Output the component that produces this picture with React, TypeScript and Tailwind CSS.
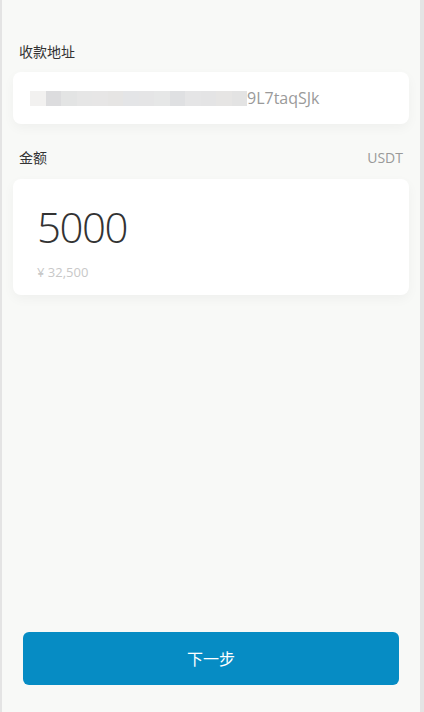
const blocks = [
  '#f2f1f0', '#dcdcde', '#e3e4e4', '#e6e6e6', '#e7e6e6', '#e6e5e4', '#e4e5e7',
  '#e5e5e6', '#e6e7e7', '#dfe0e2', '#e5e5e6', '#e4e4e5', '#e6e5e4', '#e3e3e3',
]

export default function App() {
  return (
    <div
      className="h-[712px] w-[424px] overflow-hidden border-l-2 border-r-4 border-[#e4e4e4] bg-[#f8f9f7] text-[#333]"
      style={{ fontFamily: '"Open Sans", "Noto Sans CJK SC", sans-serif' }}
    >
      <div className="flex h-full flex-col px-[11px]">
        <div className="mt-[42px] px-[6px] text-[14px] leading-[20px] text-[#333]">收款地址</div>
        <div className="mt-[10px] flex h-[52px] items-center rounded-lg bg-white px-[17px] shadow-[0_4px_12px_rgba(0,0,0,0.04)]">
          <div className="flex h-[15px] w-[217px]">
            {blocks.map((c, i) => (
              <div key={i} className="h-full flex-1" style={{ background: c }} />
            ))}
          </div>
          <span className="text-[16px] leading-[20px] text-[#9a9a9a]">9L7taqSJk</span>
        </div>

        <div className="mt-[24px] flex items-center justify-between px-[6px] text-[14px] leading-[20px]">
          <span className="text-[#333]">金额</span>
          <span className="text-[#999]">USDT</span>
        </div>
        <div className="mt-[11px] flex h-[116px] flex-col rounded-lg bg-white px-[24px] pt-[24px] shadow-[0_4px_12px_rgba(0,0,0,0.04)]">
          <div className="text-[42px] font-light leading-[48px] tracking-[-1.5px] text-[#333]">5000</div>
          <div className="mt-[12px] text-[13px] leading-[18px] text-[#c8c8c8]">¥ 32,500</div>
        </div>

        <div className="flex-1" />
        <button className="mx-[10px] mb-[27px] h-[53px] rounded-md bg-[#068cc4] text-[16px] text-white">
          下一步
        </button>
      </div>
    </div>
  )
}
